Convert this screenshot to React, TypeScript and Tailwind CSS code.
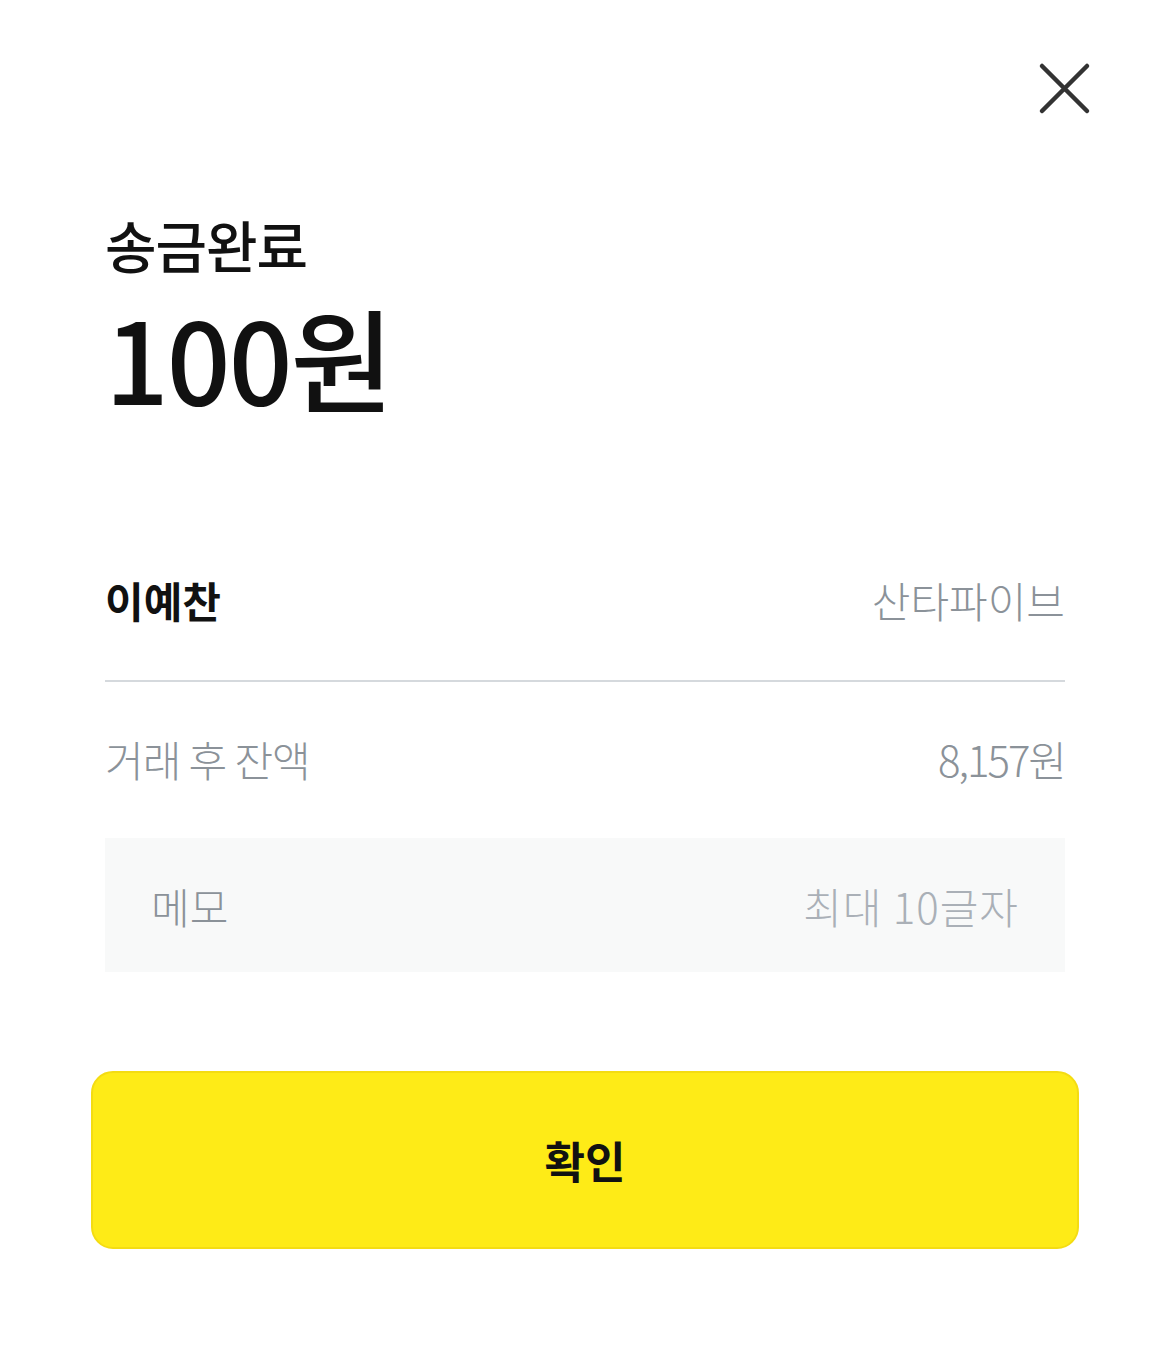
export default function App() {
  return (
    <div
      className="w-[1170px] h-[1358px] bg-white flex flex-col"
      style={{ fontFamily: '"Noto Sans CJK KR", "Noto Sans", sans-serif' }}
    >
      <div className="flex justify-end pt-[60px] pr-[78px]">
        <button className="w-[56px] h-[56px] flex items-center justify-center">
          <svg width="56" height="56" viewBox="0 0 56 56" fill="none">
            <path d="M6 6L51 51M51 6L6 51" stroke="#333333" strokeWidth="4.5" strokeLinecap="round" />
          </svg>
        </button>
      </div>

      <div className="px-[105px]">
        <h1 className="mt-[96px] text-[56px] leading-[64px] font-medium text-[#111111] tracking-[-1px]">송금완료</h1>
        <p className="mt-[20px] text-[112px] leading-[120px] font-medium text-[#111111] tracking-[-2px]">100원</p>

        <div className="mt-[153px] flex justify-between items-center h-[60px]">
          <span className="text-[42px] font-bold text-[#111111]">이예찬</span>
          <span className="text-[42px] font-light text-[#8b9299]">산타파이브</span>
        </div>
        <div className="mt-[51px] h-[2px] bg-[#d5d9dd]" />

        <div className="mt-[46px] flex justify-between items-center h-[60px]">
          <span className="text-[42px] font-light text-[#8b9299] tracking-[-1px]">거래 후 잔액</span>
          <span className="text-[42px] font-light text-[#8b9299] tracking-[-2px]">8,157원</span>
        </div>

        <div className="mt-[50px] h-[134px] bg-[#f8f9f9] flex justify-between items-center px-[46px]">
          <span className="text-[42px] font-light text-[#8b9299]">메모</span>
          <span className="text-[42px] font-light text-[#aab0b7] tracking-[1px]">최대 10글자</span>
        </div>
      </div>

      <div className="px-[91px] mt-[99px]">
        <button className="w-full h-[178px] rounded-[22px] bg-[#feeb17] border-2 border-[#f4dc12] flex items-center justify-center">
          <span className="text-[44px] font-bold text-[#111111]">확인</span>
        </button>
      </div>
    </div>
  )
}
